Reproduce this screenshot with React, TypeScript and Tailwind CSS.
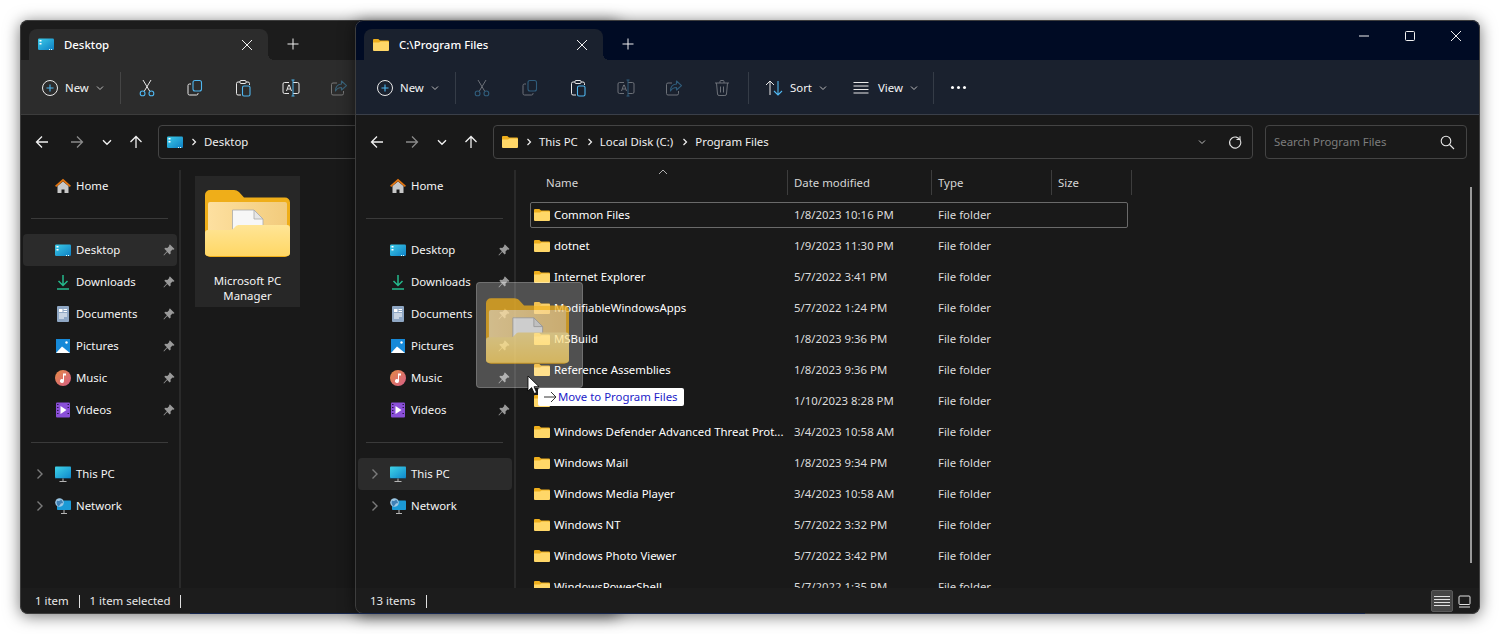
import type { ReactNode } from "react";

const BLUE = "#4fb6ef";
const WHITE = "#e8e8e8";

type IconProps = { dim?: boolean };

function Glyph({ children, dim }: { children: ReactNode; dim?: boolean }) {
  return (
    <svg width="20" height="20" viewBox="0 0 20 20" fill="none" className={dim ? "opacity-40" : ""}>
      {children}
    </svg>
  );
}

function PlusCircle() {
  return (
    <svg width="18" height="18" viewBox="0 0 18 18" fill="none">
      <circle cx="9" cy="9" r="7.5" stroke={WHITE} strokeWidth="1" />
      <path d="M9 5.5v7M5.5 9h7" stroke={BLUE} strokeWidth="1.1" />
    </svg>
  );
}

function CutIcon({ dim }: IconProps) {
  return (
    <Glyph dim={dim}>
      <path d="M6 2l6.6 11M14 2L7.4 13" stroke={WHITE} strokeWidth="1" />
      <circle cx="5.6" cy="15.4" r="2.4" stroke={BLUE} strokeWidth="1.1" />
      <circle cx="14.4" cy="15.4" r="2.4" stroke={BLUE} strokeWidth="1.1" />
    </Glyph>
  );
}

function CopyIcon({ dim }: IconProps) {
  return (
    <Glyph dim={dim}>
      <path d="M6 6H4.5A1.5 1.5 0 003 7.5v8A1.5 1.5 0 004.5 17h7a1.5 1.5 0 001.5-1.5V15" stroke={WHITE} strokeWidth="1" />
      <rect x="8" y="2.5" width="8.5" height="10.5" rx="2" stroke={BLUE} strokeWidth="1.1" />
    </Glyph>
  );
}

function PasteIcon({ dim }: IconProps) {
  return (
    <Glyph dim={dim}>
      <path d="M7 4H5a1.5 1.5 0 00-1.5 1.5v10A1.5 1.5 0 005 17h3M13 4h2a1.5 1.5 0 011.5 1.5V7" stroke={WHITE} strokeWidth="1" />
      <rect x="7" y="2.5" width="6" height="3" rx="1" stroke={WHITE} strokeWidth="1" />
      <rect x="9.5" y="8" width="7.5" height="10" rx="1.5" stroke={BLUE} strokeWidth="1.1" />
    </Glyph>
  );
}

function RenameIcon({ dim }: IconProps) {
  return (
    <Glyph dim={dim}>
      <path d="M8 4.5H3.5A1.5 1.5 0 002 6v8a1.5 1.5 0 001.5 1.5H8M12 4.5h4.5A1.5 1.5 0 0118 6v8a1.5 1.5 0 01-1.5 1.5H12" stroke={WHITE} strokeWidth="1" />
      <path d="M5.5 13l2.2-6h.6l2.2 6M6.3 11h3.4" stroke={WHITE} strokeWidth="1" />
      <path d="M12 2v16M10.5 2h3M10.5 18h3" stroke={BLUE} strokeWidth="1" />
    </Glyph>
  );
}

function ShareIcon({ dim }: IconProps) {
  return (
    <Glyph dim={dim}>
      <path d="M8 5H4a1.5 1.5 0 00-1.5 1.5v9A1.5 1.5 0 004 17h9a1.5 1.5 0 001.5-1.5V13" stroke={WHITE} strokeWidth="1" />
      <path d="M12.5 3l5 4.6-5 4.4V9.5c-3 0-4.6 1-6 3.5 0-4 2-6.7 6-7z" stroke={BLUE} strokeWidth="1.1" strokeLinejoin="round" />
    </Glyph>
  );
}

function TrashIcon({ dim }: IconProps) {
  return (
    <Glyph dim={dim}>
      <path d="M3 5h14M8 5V3.5A1 1 0 019 2.5h2a1 1 0 011 1V5M4.5 5l1 11a1.6 1.6 0 001.6 1.5h5.8a1.6 1.6 0 001.6-1.5l1-11M8.5 8.5v6M11.5 8.5v6" stroke={WHITE} strokeWidth="1" />
    </Glyph>
  );
}

function SortIcon() {
  return (
    <Glyph>
      <path d="M6 17V3M2 7l4-4 4 4" stroke={WHITE} strokeWidth="1" />
      <path d="M14 3v14M10 13l4 4 4-4" stroke={BLUE} strokeWidth="1.1" />
    </Glyph>
  );
}

function ViewIcon() {
  return (
    <Glyph>
      <path d="M2.5 4.5h15M2.5 8h15M2.5 11.5h15M2.5 15h15" stroke={WHITE} strokeWidth="1" />
    </Glyph>
  );
}

function SmallChevron({ color = "#bdbdbd" }: { color?: string }) {
  return (
    <svg width="8" height="6" viewBox="0 0 8 6" fill="none">
      <path d="M1 1.5l3 3 3-3" stroke={color} strokeWidth="1" />
    </svg>
  );
}

function NavChevron() {
  return (
    <svg width="10" height="7" viewBox="0 0 10 7" fill="none">
      <path d="M1 1.2l4 4 4-4" stroke="#f0f0f0" strokeWidth="1.4" />
    </svg>
  );
}

function Arrow({ rotate = 0, color = "#f0f0f0" }: { rotate?: number; color?: string }) {
  return (
    <svg width="14" height="14" viewBox="0 0 14 14" fill="none" style={{ transform: `rotate(${rotate}deg)` }}>
      <path d="M13 7H1.5M7 1.5L1.5 7 7 12.5" stroke={color} strokeWidth="1.3" />
    </svg>
  );
}

function SmallFolder() {
  return (
    <svg width="16" height="14" viewBox="0 0 16 14">
      <path d="M0 2a1 1 0 011-1h4.3l1.7 1.5h8a1 1 0 011 1V8H0z" fill="#eeae1c" />
      <path d="M0 4.5h6l1.5-1H15a1 1 0 011 1V12a1 1 0 01-1 1H1a1 1 0 01-1-1z" fill="#ffd768" />
    </svg>
  );
}

function LargeFolder({ width = 85, height = 67 }: { width?: number; height?: number }) {
  return (
    <svg width={width} height={height} viewBox="0 0 85 67" className="block">
      <defs>
        <linearGradient id="flap" x1="0" y1="0" x2="0" y2="1">
          <stop offset="0" stopColor="#ffe596" />
          <stop offset="1" stopColor="#ffd765" />
        </linearGradient>
        <linearGradient id="inner" x1="0" y1="0" x2="1" y2="0">
          <stop offset="0" stopColor="#fde0a0" />
          <stop offset="1" stopColor="#f2cb7c" />
        </linearGradient>
      </defs>
      <path d="M0 5a5 5 0 015-5h24c2 0 3.5.7 5 2l5 5.5h41a5 5 0 015 5V62a5 5 0 01-5 5H5a5 5 0 01-5-5z" fill="#efae19" />
      <rect x="3" y="12" width="79" height="38" rx="2" fill="url(#inner)" />
      <path d="M27.5 20h21.500l9 9v14H27.500z" fill="#f7f7f7" stroke="#a9a9a9" strokeWidth="0.8" />
      <path d="M49 20v9h9z" fill="#e6e6e6" stroke="#a9a9a9" strokeWidth="0.8" />
      <path d="M0 43a3 3 0 013-3h21c2 0 3-.4 4.5-1.500l2-2c1-1 2-1.500 4-1.500h47.500a3 3 0 013 3v25a3 3 0 01-3 3H3a3 3 0 01-3-3z" fill="url(#flap)" />
    </svg>
  );
}

function DesktopIcon() {
  return (
    <svg width="16" height="13" viewBox="0 0 16 13" className="block">
      <defs>
        <linearGradient id="desk" x1="0" y1="0" x2="1" y2="1">
          <stop offset="0" stopColor="#3ccbe8" />
          <stop offset="1" stopColor="#0e7fc4" />
        </linearGradient>
      </defs>
      <rect x="0" y="0.5" width="16" height="11.5" rx="1.2" fill="url(#desk)" />
      <rect x="1.5" y="2" width="2" height="1.5" fill="#fff" />
      <rect x="1.5" y="5" width="2" height="1.5" fill="#fff" />
      <rect x="11" y="11" width="1" height="1" fill="#dff" />
      <rect x="13" y="11" width="1" height="1" fill="#dff" />
    </svg>
  );
}

function HomeIcon() {
  return (
    <svg width="16" height="16" viewBox="0 0 16 16" className="block">
      <path d="M2.5 8L8 3.5 13.5 8v7h-4v-3.5h-3V15h-4z" fill="#c8c8c8" />
      <path d="M0 7.8L8 .8l8 7-1.2 1.2L8 3.3 1.2 9z" fill="#e0730f" />
    </svg>
  );
}

function DownloadsIcon() {
  return (
    <svg width="16" height="16" viewBox="0 0 16 16" fill="none" className="block">
      <path d="M8 1v10M3.5 7L8 11.5 12.5 7" stroke="#25b98c" strokeWidth="1.5" />
      <path d="M2 15h12" stroke="#25b98c" strokeWidth="1.5" />
    </svg>
  );
}

function DocumentsIcon() {
  return (
    <svg width="16" height="16" viewBox="0 0 16 16" className="block">
      <rect x="2" y="0" width="12" height="16" rx="1" fill="#8fa7c4" />
      <rect x="4" y="3" width="3.5" height="3" fill="#fff" />
      <path d="M8.5 3.5h3.5M8.5 5.5h3.5M4 8h8M4 10h8M4 12h5" stroke="#fff" strokeWidth="1" />
    </svg>
  );
}

function PicturesIcon() {
  return (
    <svg width="16" height="16" viewBox="0 0 16 16" className="block">
      <rect x="1" y="1" width="14" height="14" fill="#1689d8" />
      <path d="M1 15l6-6.5 8 6.5z" fill="#fff" />
      <circle cx="11.5" cy="4.5" r="1.2" fill="#fff" />
    </svg>
  );
}

function MusicIcon() {
  return (
    <svg width="16" height="16" viewBox="0 0 16 16" className="block">
      <defs>
        <linearGradient id="mus" x1="0" y1="0" x2="1" y2="1">
          <stop offset="0" stopColor="#e58a45" />
          <stop offset="1" stopColor="#d55e86" />
        </linearGradient>
      </defs>
      <circle cx="8" cy="8" r="8" fill="url(#mus)" />
      <path d="M8 3.5h3v2H9v5.5a2 2 0 11-1-1.7z" fill="#fff" />
    </svg>
  );
}

function VideosIcon() {
  return (
    <svg width="16" height="16" viewBox="0 0 16 16" className="block">
      <rect x="1" y="0.5" width="14" height="15" rx="1" fill="#8a4fd8" />
      <path d="M5.5 4l6 4-6 4z" fill="#fff" />
      <path d="M2 2.5h1.5M2 5.5h1.5M2 8.5h1.5M2 11.5h1.5M12.5 2.5H14M12.5 5.5H14M12.5 11.5H14" stroke="#2d1650" strokeWidth="1.2" />
    </svg>
  );
}

function PcIcon() {
  return (
    <svg width="16" height="16" viewBox="0 0 16 16" className="block">
      <defs>
        <linearGradient id="pc" x1="0" y1="0" x2="1" y2="1">
          <stop offset="0" stopColor="#40d4e8" />
          <stop offset="1" stopColor="#0f88cc" />
        </linearGradient>
      </defs>
      <rect x="0" y="0.5" width="16" height="11.5" rx="0.8" fill="url(#pc)" />
      <path d="M0 12h16v.5H0z" fill="#0a5f93" />
      <path d="M7.5 12.5h1V15h-1zM4.5 15h7v1h-7z" fill="#b5b5b5" />
    </svg>
  );
}

function NetworkIcon() {
  return (
    <svg width="16" height="16" viewBox="0 0 16 16" className="block">
      <rect x="2" y="2.5" width="14" height="9.5" rx="0.8" fill="#1b9ad6" />
      <path d="M8.5 12h1v3h-1zM6 15h6v1H6z" fill="#b5b5b5" />
      <circle cx="4.5" cy="4.5" r="4.3" fill="#9cc7e4" />
      <path d="M2 2.5c1.5 1 3 .5 4-1 1 1 1.8 2 2 3.5-1 .5-2 0-2.5 1S4 8 3.5 8.500C2 7 1 5 2 2.500z" fill="#3f80b5" />
    </svg>
  );
}

function PinIcon() {
  return (
    <svg width="12" height="12" viewBox="0 0 12 12" className="block">
      <path d="M7 .5l4.500 4.500-1 .8-1-.2-2 2 .2 2-1 1-2.500-2.600L1 11.500.5 11l3.400-3.700L1.300 4.800l1-1 2 .2 2-2-.2-1z" fill="#9a9a9a" />
    </svg>
  );
}

function Chevron() {
  return (
    <svg width="8" height="12" viewBox="0 0 8 12" fill="none" className="block">
      <path d="M1.5 1.5L6 6l-4.500 4.500" stroke="#7b7b7b" strokeWidth="1.4" />
    </svg>
  );
}

function Close({ size = 12 }: { size?: number }) {
  return (
    <svg width={size} height={size} viewBox="0 0 12 12" fill="none">
      <path d="M1 1l10 10M11 1L1 11" stroke="#f0f0f0" strokeWidth="1" />
    </svg>
  );
}

function Plus() {
  return (
    <svg width="12" height="12" viewBox="0 0 12 12" fill="none">
      <path d="M6 .5v11M.5 6h11" stroke="#f0f0f0" strokeWidth="1" />
    </svg>
  );
}

function Crumb() {
  return (
    <svg width="6" height="8" viewBox="0 0 6 8" fill="none" className="ml-[5px] mr-[7px]">
      <path d="M1.5 1L4.5 4 1.5 7" stroke="#f0f0f0" strokeWidth="1.2" />
    </svg>
  );
}

const navItems = [
  { label: "Desktop", icon: <DesktopIcon /> },
  { label: "Downloads", icon: <DownloadsIcon /> },
  { label: "Documents", icon: <DocumentsIcon /> },
  { label: "Pictures", icon: <PicturesIcon /> },
  { label: "Music", icon: <MusicIcon /> },
  { label: "Videos", icon: <VideosIcon /> },
];

function NavRow({ icon, label, active, pin, expand }: { icon: ReactNode; label: string; active?: boolean; pin?: boolean; expand?: boolean }) {
  return (
    <div className={`ml-[3px] mr-[2px] flex h-[32px] items-center rounded-[4px] ${active ? "bg-[#2b2b2b]" : ""}`}>
      <span className="flex w-[32px] justify-center pl-[1px]">{expand && <Chevron />}</span>
      <span className="flex w-[16px] justify-center">{icon}</span>
      <span className="ml-[5px] text-[#f5f5f5]">{label}</span>
      {pin && (
        <span className="ml-auto mr-[2px]">
          <PinIcon />
        </span>
      )}
    </div>
  );
}

function Sidebar({ active }: { active: string }) {
  return (
    <div className="w-[159px] shrink-0">
      <NavRow icon={<HomeIcon />} label="Home" />
      <div className="mx-[11px] mb-[15px] mt-[16px] h-px bg-[#3a3a3a]" />
      {navItems.map((item) => (
        <NavRow key={item.label} icon={item.icon} label={item.label} pin active={active === item.label} />
      ))}
      <div className="mx-[11px] mb-[15px] mt-[16px] h-px bg-[#3a3a3a]" />
      <NavRow icon={<PcIcon />} label="This PC" expand active={active === "This PC"} />
      <NavRow icon={<NetworkIcon />} label="Network" expand />
    </div>
  );
}

function ToolButton({ children }: { children: ReactNode }) {
  return <div className="flex h-[32px] w-[48px] items-center justify-center">{children}</div>;
}

function ToolSep() {
  return <div className="h-[32px] w-px bg-[#ffffff1f]" />;
}

function Toolbar({ front }: { front?: boolean }) {
  return (
    <div className={`flex h-[55px] shrink-0 items-center border-b pt-[1px] ${front ? "border-[#3a3f49] bg-[#1a212e]" : "border-[#3c3c3c] bg-[#2c2c2c]"}`}>
      <div className="flex w-[100px] items-center pl-[21px]">
        <PlusCircle />
        <span className="ml-[6px] text-[#f5f5f5]">New</span>
        <span className="ml-[7px]">
          <SmallChevron />
        </span>
      </div>
      <ToolSep />
      <div className="ml-[2px] flex">
        <ToolButton><CutIcon dim={front} /></ToolButton>
        <ToolButton><CopyIcon dim={front} /></ToolButton>
        <ToolButton><PasteIcon /></ToolButton>
        <ToolButton><RenameIcon dim={front} /></ToolButton>
        <ToolButton><ShareIcon dim /></ToolButton>
        {front && <ToolButton><TrashIcon dim /></ToolButton>}
      </div>
      {front && (
        <>
          <div className="ml-[2px]"><ToolSep /></div>
          <div className="ml-[15px] flex items-center">
            <SortIcon />
            <span className="ml-[6px] text-[#f5f5f5]">Sort</span>
            <span className="ml-[7px]"><SmallChevron /></span>
          </div>
          <div className="ml-[24px] flex items-center">
            <ViewIcon />
            <span className="ml-[7px] text-[#f5f5f5]">View</span>
            <span className="ml-[7px]"><SmallChevron /></span>
          </div>
          <div className="ml-[15px]"><ToolSep /></div>
          <div className="ml-[17px] flex gap-[3px]">
            <span className="h-[3px] w-[3px] rounded-full bg-white" />
            <span className="h-[3px] w-[3px] rounded-full bg-white" />
            <span className="h-[3px] w-[3px] rounded-full bg-white" />
          </div>
        </>
      )}
    </div>
  );
}

function AddressRow({ icon, crumbs, search }: { icon: ReactNode; crumbs: string[]; search?: string }) {
  return (
    <div className="flex h-[55px] shrink-0 items-start bg-[#191919] pt-[10px]">
      <div className="ml-[7px] flex h-[34px] w-[30px] items-center justify-center"><Arrow /></div>
      <div className="ml-[5px] flex h-[34px] w-[30px] items-center justify-center"><Arrow rotate={180} color="#8a8a8a" /></div>
      <div className="flex h-[34px] w-[30px] items-center justify-center"><NavChevron /></div>
      <div className="ml-[-1px] flex h-[34px] w-[30px] items-center justify-center"><Arrow rotate={90} /></div>
      <div className="ml-[7px] flex h-[34px] flex-1 items-center rounded-[4px] border border-[#444] pl-[8px] pr-[10px]">
        {icon}
        <span className="ml-[3px]" />
        {crumbs.map((c) => (
          <span key={c} className="flex items-center text-[#f0f0f0]">
            <Crumb />
            <span className="mr-[4px]">{c}</span>
          </span>
        ))}
        <span className="ml-auto mr-[22px]"><SmallChevron /></span>
        <svg width="14" height="14" viewBox="0 0 14 14" fill="none">
          <path d="M11.8 4.5A5.5 5.5 0 102.500 10.800M11.800 4.500A5.500 5.500 0 111.800 7" stroke="#e0e0e0" strokeWidth="1.1" />
          <path d="M8.5 4.5h3.5V1.2" stroke="#e0e0e0" strokeWidth="1.1" />
        </svg>
      </div>
      {search && (
        <div className="ml-[12px] mr-[13px] flex h-[34px] w-[202px] items-center justify-between rounded-[4px] border border-[#444] pl-[8px] pr-[11px]">
          <span className="text-[#7d7d7d]">{search}</span>
          <svg width="15" height="15" viewBox="0 0 15 15" fill="none">
            <circle cx="6" cy="6" r="4.8" stroke="#e8e8e8" strokeWidth="1.1" />
            <path d="M9.5 9.5L14 14" stroke="#e8e8e8" strokeWidth="1.1" />
          </svg>
        </div>
      )}
    </div>
  );
}

function WindowShell({
  className,
  front,
  tabIcon,
  title,
  address,
  status,
  active,
  children,
}: {
  className: string;
  front?: boolean;
  tabIcon: ReactNode;
  title: string;
  address: ReactNode;
  status: ReactNode;
  active: string;
  children: ReactNode;
}) {
  return (
    <div className={`absolute top-[20px] flex h-[594px] flex-col overflow-hidden rounded-[8px] shadow-[0_2px_16px_rgba(0,0,0,0.55)] ${className}`}>
      <div className={`flex h-[40px] shrink-0 items-end ${front ? "bg-[#000b24]" : "bg-[#1c1c1c]"}`}>
        <div className={`relative ml-[9px] flex h-[31px] w-[239px] items-center rounded-t-[8px] pl-[8px] ${front ? "bg-[#1a212e]" : "bg-[#2c2c2c]"}`}>
          <span className="flex w-[17px] justify-center">{tabIcon}</span>
          <span className="ml-[10px] font-medium text-white">{title}</span>
          <span className="ml-auto mr-[15px]"><Close size={12} /></span>
          <span
            className={`absolute bottom-0 left-full h-[6px] w-[6px] ${
              front
                ? "bg-[radial-gradient(circle_at_100%_0,transparent_6px,#1a212e_6px)]"
                : "bg-[radial-gradient(circle_at_100%_0,transparent_6px,#2c2c2c_6px)]"
            }`}
          />
        </div>
        <div className="mb-[10px] ml-[19px]"><Plus /></div>
        {front && (
          <div className="ml-auto mb-[18px] flex items-center">
            <svg width="12" height="12" viewBox="0 0 12 12" className="mr-[34px]"><path d="M1 6h10" stroke="#f0f0f0" strokeWidth="1" /></svg>
            <svg width="12" height="12" viewBox="0 0 12 12" fill="none" className="mr-[34px]"><rect x="1.5" y="1.5" width="9" height="9" rx="1" stroke="#f0f0f0" strokeWidth="1" /></svg>
            <span className="mr-[18px]"><Close size={12} /></span>
          </div>
        )}
      </div>
      <Toolbar front={front} />
      {address}
      <div className="flex min-h-0 flex-1 bg-[#191919]">
        <Sidebar active={active} />
        <div className="w-[2px] shrink-0 bg-[#2a2a2a]" />
        <div className="relative min-w-0 flex-1 overflow-hidden">{children}</div>
      </div>
      <div className="flex h-[26px] shrink-0 items-center bg-[#1c1c1c] pl-[15px] text-[#e8e8e8]">{status}</div>
      <div className="pointer-events-none absolute inset-0 rounded-[8px] border border-[#3d3d3d]" />
    </div>
  );
}

const files = [
  ["Common Files", "1/8/2023 10:16 PM"],
  ["dotnet", "1/9/2023 11:30 PM"],
  ["Internet Explorer", "5/7/2022 3:41 PM"],
  ["ModifiableWindowsApps", "5/7/2022 1:24 PM"],
  ["MSBuild", "1/8/2023 9:36 PM"],
  ["Reference Assemblies", "1/8/2023 9:36 PM"],
  ["", "1/10/2023 8:28 PM"],
  ["Windows Defender Advanced Threat Prot...", "3/4/2023 10:58 AM"],
  ["Windows Mail", "1/8/2023 9:34 PM"],
  ["Windows Media Player", "3/4/2023 10:58 AM"],
  ["Windows NT", "5/7/2022 3:32 PM"],
  ["Windows Photo Viewer", "5/7/2022 3:42 PM"],
  ["WindowsPowerShell", "5/7/2022 1:35 PM"],
];

function HeaderCell({ label, className }: { label: string; className: string }) {
  return <div className={`flex h-[25px] items-center border-r border-[#3d3d3d] text-[#d6d6d6] ${className}`}>{label}</div>;
}

function FileList() {
  return (
    <div className="absolute inset-0 pl-[14px]">
      <div className="flex">
        <HeaderCell label="Name" className="relative w-[258px] pl-[16px] pt-[1px]" />
        <HeaderCell label="Date modified" className="w-[144px] pl-[6px]" />
        <HeaderCell label="Type" className="w-[120px] pl-[6px]" />
        <HeaderCell label="Size" className="w-[80px] pl-[6px]" />
      </div>
      <div className="mt-[7px] flex w-[598px] flex-col gap-[5px]">
        {files.map(([name, date], i) => (
          <div key={date + i} className={`flex h-[26px] shrink-0 items-center pb-[1px] ${i === 0 ? "rounded-[2px] border border-[#6a6a6a]" : "border border-transparent"}`}>
            <span className="ml-[3px]"><SmallFolder /></span>
            <span className="ml-[4px] w-[240px] whitespace-nowrap text-white">{name}</span>
            <span className="w-[144px] text-[#dcdcdc]">{date}</span>
            <span className="text-[#dcdcdc]">File folder</span>
          </div>
        ))}
      </div>
      <svg width="10" height="6" viewBox="0 0 10 6" fill="none" className="absolute left-[142px] top-[-1px]">
        <path d="M1 5l4-4 4 4" stroke="#b0b0b0" strokeWidth="1" />
      </svg>
      <div className="absolute left-[954px] top-[17px] h-[376px] w-[2px] bg-[#9a9a9a]" />
    </div>
  );
}

function DragGhost() {
  return (
    <>
      <div className="absolute left-[476px] top-[282px] h-[106px] w-[107px] rounded-[4px] border border-[#ffffff30] bg-[#ffffff3d] pl-[9px] pt-[15px]">
        <div className="opacity-75">
          <LargeFolder width={83} height={66} />
        </div>
      </div>
      <svg width="14" height="20" viewBox="0 0 14 20" className="absolute left-[527px] top-[375px]">
        <path d="M1 1v15l3.6-3.4L7.3 18.5l2.3-1-2.600-5.800h5z" fill="#fff" stroke="#000" strokeWidth="0.8" />
      </svg>
      <div className="absolute left-[538px] top-[388px] flex h-[18px] w-[146px] items-center rounded-[2px] bg-white pl-[5px] text-[#1c1cc8]">
        <svg width="14" height="12" viewBox="0 0 14 12" fill="none">
          <path d="M1 6h12M8 1l5 5-5 5" stroke="#333" strokeWidth="1" />
        </svg>
        <span className="ml-[1px]">Move to Program Files</span>
      </div>
    </>
  );
}

export default function App() {
  return (
    <div className="relative h-[634px] w-[1500px] overflow-hidden bg-white font-['Noto_Sans',sans-serif] text-[11.4px] leading-[16px]">
      <WindowShell
        className="left-[20px] w-[600px]"
        tabIcon={<DesktopIcon />}
        title="Desktop"
        active="Desktop"
        address={<AddressRow icon={<DesktopIcon />} crumbs={["Desktop"]} />}
        status={
          <>
            <span>1 item</span>
            <span className="ml-[10px] h-[13px] w-px bg-[#e0e0e0]" />
            <span className="ml-[10px]">1 item selected</span>
            <span className="ml-[10px] h-[13px] w-px bg-[#e0e0e0]" />
          </>
        }
      >
        <div className="ml-[14px] mt-[6px] flex h-[131px] w-[105px] flex-col items-center bg-[#272727] pt-[14px]">
          <LargeFolder />
          <div className="mt-[16px] text-center leading-[15px] text-[#f5f5f5]">
            Microsoft PC
            <br />
            Manager
          </div>
        </div>
      </WindowShell>

      <WindowShell
        className="left-[355px] w-[1125px]"
        front
        tabIcon={<SmallFolder />}
        title="C:\Program Files"
        active="This PC"
        address={<AddressRow icon={<SmallFolder />} crumbs={["This PC", "Local Disk (C:)", "Program Files"]} search="Search Program Files" />}
        status={
          <>
            <span>13 items</span>
            <span className="ml-[10px] h-[13px] w-px bg-[#e0e0e0]" />
            <div className="ml-auto mr-[9px] flex items-center">
              <div className="flex h-[22px] w-[22px] items-center justify-center rounded-[2px] border border-[#5a5a5a] bg-[#454545]">
                <svg width="16" height="12" viewBox="0 0 16 12" fill="none">
                  <path d="M0 1.5h16M0 4.5h16M0 7.5h16M0 10.5h16" stroke="#e0e0e0" strokeWidth="1" />
                </svg>
              </div>
              <svg width="13" height="13" viewBox="0 0 13 13" fill="none" className="ml-[5px]">
                <rect x="1" y="1" width="11" height="8.5" rx="1" stroke="#e0e0e0" strokeWidth="1" />
                <path d="M1 12h11" stroke="#e0e0e0" strokeWidth="1" />
              </svg>
            </div>
          </>
        }
      >
        <FileList />
      </WindowShell>

      <DragGhost />
      <div className="absolute left-[190px] top-[613px] h-px w-[1175px] bg-[#16264d]" />
    </div>
  );
}
